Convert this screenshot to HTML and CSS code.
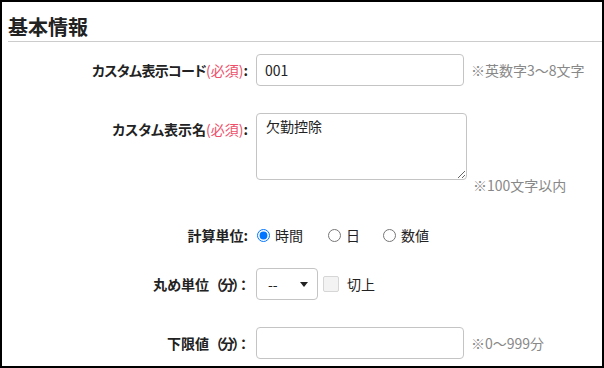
FILE: index.html
```html
<!DOCTYPE html>
<html lang="ja">
<head>
    <meta charset="UTF-8">
    <meta name="viewport" content="width=device-width, initial-scale=1.0">
    <title>基本情報</title>
    <link rel="stylesheet" href="styles.css">
</head>
<body>
    <div class="frame">
        <h2>基本情報</h2>

        <form class="info-form">
            <div class="row row-code">
                <label class="label" for="code"><span class="tight">カスタム表示コード</span><span class="req">(必須)</span>:</label>
                <div class="field">
                    <input type="text" id="code" class="text-input" value="001">
                    <span class="hint">※英数字3～8文字</span>
                </div>
            </div>

            <div class="row row-name">
                <label class="label" for="name">カスタム表示名<span class="req">(必須)</span>:</label>
                <div class="field field-bottom">
                    <textarea id="name" class="text-area">欠勤控除</textarea>
                    <span class="hint hint-low">※100文字以内</span>
                </div>
            </div>

            <div class="row row-unit">
                <div class="label">計算単位:</div>
                <div class="field">
                    <label class="radio radio-hour"><input type="radio" name="unit" checked>時間</label>
                    <label class="radio radio-day"><input type="radio" name="unit">日</label>
                    <label class="radio"><input type="radio" name="unit">数値</label>
                </div>
            </div>

            <div class="row row-round">
                <label class="label" for="round">丸め単位<span class="paren">（分）：</span></label>
                <div class="field">
                    <span class="select-wrap">
                        <select id="round" class="select">
                            <option>--</option>
                        </select>
                    </span>
                    <label class="check"><input type="checkbox" disabled>切上</label>
                </div>
            </div>

            <div class="row row-min">
                <label class="label" for="min">下限値<span class="paren">（分）：</span></label>
                <div class="field">
                    <input type="text" id="min" class="text-input">
                    <span class="hint">※0～999分</span>
                </div>
            </div>
        </form>
    </div>
</body>
</html>
```

FILE: styles.css
```css
* {
    box-sizing: border-box;
}
body {
    margin: 0;
    font-family: "Noto Sans CJK JP", "Noto Sans", sans-serif;
    font-size: 14px;
    color: #222;
    background: #fff;
}
.frame {
    width: 604px;
    height: 368px;
    border: 2px solid #000;
    overflow: hidden;
}
h2 {
    margin: 0 0 0 6px;
    padding-top: 11px;
    font-size: 20px;
    line-height: 28px;
    font-weight: bold;
    color: #222;
    border-bottom: 1px solid #ccc;
}
.row {
    display: flex;
    align-items: flex-start;
}
.row-code {
    margin-top: 12px;
}
.row-name {
    margin-top: 27px;
}
.row-unit {
    margin-top: 39px;
}
.row-round {
    margin-top: 17px;
}
.row-min {
    margin-top: 27px;
}
.label {
    width: 246px;
    flex: none;
    text-align: right;
    font-weight: bold;
    font-size: 14px;
    line-height: 32px;
    font-feature-settings: "palt";
    margin-right: 8px;
}
.tight {
    letter-spacing: -0.6px;
}
.paren {
    font-feature-settings: normal;
    letter-spacing: -2.5px;
}
.req {
    color: #ee4f6a;
    font-weight: normal;
}
.field {
    display: flex;
    align-items: center;
    height: 32px;
}
.field-bottom {
    height: 67px;
    align-items: flex-end;
}
.text-input {
    width: 208px;
    height: 32px;
    border: 1px solid #c4c4c4;
    border-radius: 4px;
    padding: 0 8px;
    font-family: inherit;
    font-size: 14px;
    color: #222;
}
.text-area {
    width: 211px;
    height: 67px;
    border: 1px solid #c4c4c4;
    border-radius: 4px;
    padding: 2px 9px;
    font-family: inherit;
    font-size: 14px;
    line-height: 20px;
    color: #222;
    resize: vertical;
}
.hint {
    margin-left: 7px;
    color: #888;
    font-size: 14px;
    line-height: 20px;
}
.hint-low {
    margin-left: 6px;
    margin-bottom: -15px;
}
.radio {
    display: flex;
    align-items: center;
    line-height: 20px;
}
.radio input {
    margin: 0 5px 0 1px;
    width: 13px;
    height: 13px;
}
.radio-hour {
    width: 71px;
}
.radio-day {
    width: 55px;
}
.select-wrap {
    position: relative;
    display: inline-block;
}
.select-wrap::after {
    content: "";
    position: absolute;
    left: 44px;
    top: 14px;
    border-left: 4px solid transparent;
    border-right: 4px solid transparent;
    border-top: 5px solid #222;
    pointer-events: none;
}
.select {
    appearance: none;
    width: 62px;
    height: 32px;
    border: 1px solid #c4c4c4;
    border-radius: 4px;
    padding: 0 0 0 11px;
    background: #fff;
    font-family: inherit;
    font-size: 14px;
    color: #222;
}
.check {
    display: flex;
    align-items: center;
    margin-left: 5px;
}
.check input {
    appearance: none;
    width: 16px;
    height: 16px;
    margin: 0 8px 0 0;
    border: 1px solid #d6d6d6;
    border-radius: 2px;
    background: #f3f3f3;
}
```
